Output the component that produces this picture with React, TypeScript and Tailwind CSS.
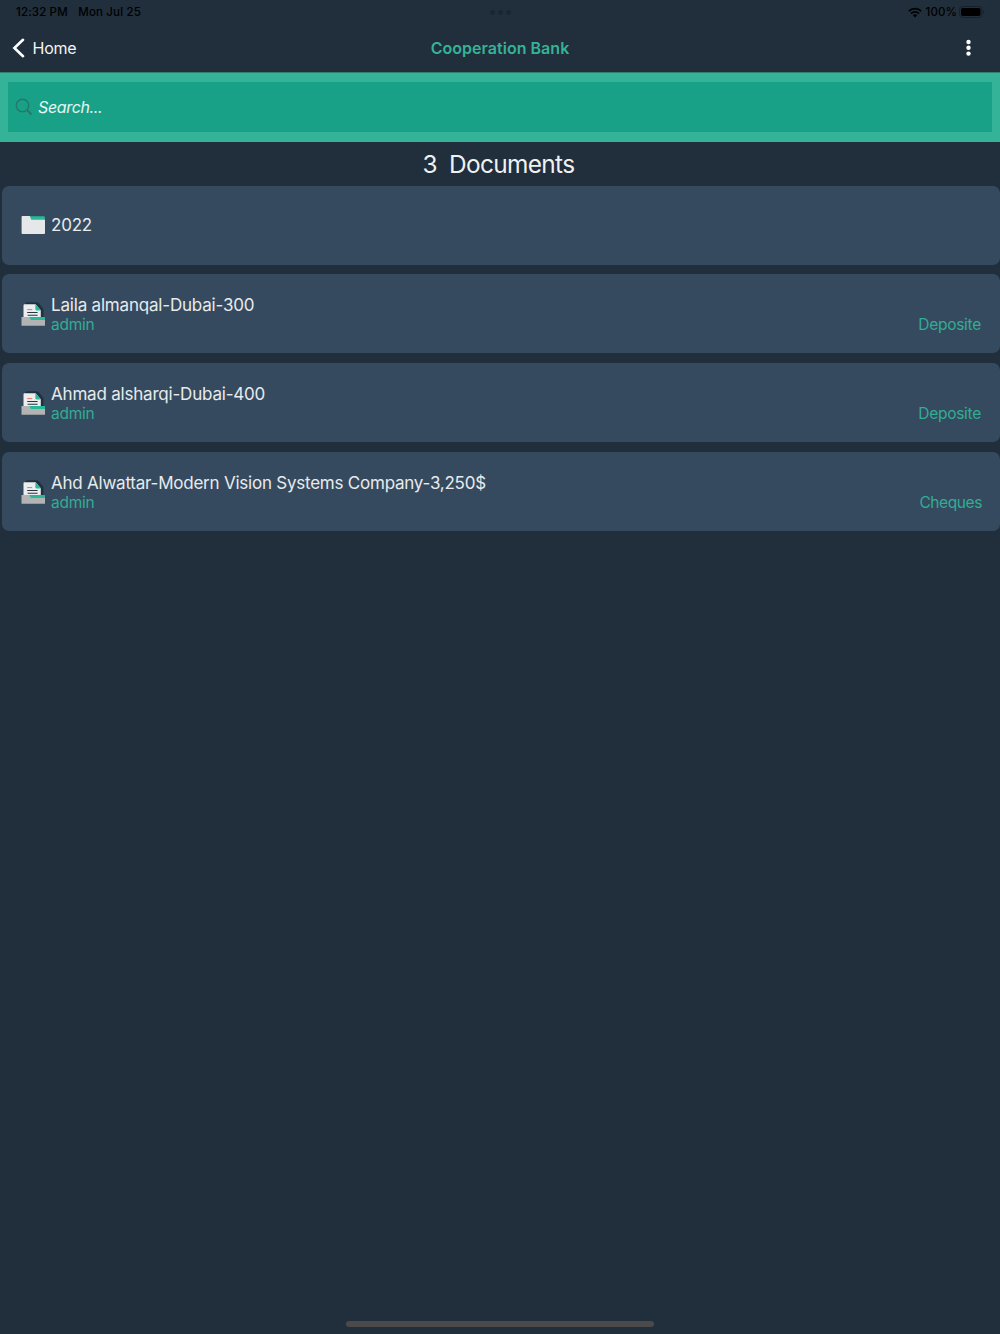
type Doc = {
  name: string;
  owner?: string;
  type?: string;
  nameTracking: string;
  typeTracking?: string;
};

const DOCS: Doc[] = [
  { name: "2022", nameTracking: "tracking-[-0.2px]" },
  {
    name: "Laila almanqal-Dubai-300",
    owner: "admin",
    type: "Deposite",
    nameTracking: "tracking-[-0.19px]",
    typeTracking: "tracking-[-0.27px]",
  },
  {
    name: "Ahmad alsharqi-Dubai-400",
    owner: "admin",
    type: "Deposite",
    nameTracking: "tracking-[-0.2px]",
    typeTracking: "tracking-[-0.27px]",
  },
  {
    name: "Ahd Alwattar-Modern Vision Systems Company-3,250$",
    owner: "admin",
    type: "Cheques",
    nameTracking: "tracking-[-0.23px]",
    typeTracking: "-mr-px tracking-[-0.4px]",
  },
];

function WifiIcon() {
  return (
    <svg width="14" height="11" viewBox="0 0 14 11" fill="none" stroke="#000" strokeWidth="1.8">
      <path d="M0.8 4.2a8.8 8.8 0 0 1 12.4 0" />
      <path d="M3 6.6a5.7 5.7 0 0 1 8 0" />
      <path d="M7 10.4 4.9 8.3a3 3 0 0 1 4.2 0z" fill="#000" stroke="none" />
    </svg>
  );
}

function BatteryIcon() {
  return (
    <svg width="26" height="12" viewBox="0 0 26 12">
      <rect x="0.5" y="0.5" width="22.5" height="11" rx="3.2" fill="none" stroke="#17212b" />
      <rect x="2" y="2" width="19.5" height="8" rx="1.8" fill="#000" />
      <path d="M24.2 4.2c1.2.5 1.2 3.1 0 3.6z" fill="#17212b" />
    </svg>
  );
}

function FolderIcon() {
  return (
    <svg width="24" height="24" viewBox="0 0 24 24">
      <path d="M8 3.2h14.8a1 1 0 0 1 1 1V9H8z" fill="#27b999" />
      <path d="M1.6 3.1h6.7c.6 0 .9.3 1 .8l.4 1.9c.2.7.6 1 1.2 1h13.1v13.1c0 .7-.5 1.2-1.2 1.2H1.8c-.7 0-1.2-.5-1.2-1.2V4.1c0-.6.4-1 1-1z" fill="#e6e7e8" />
    </svg>
  );
}

function DocumentIcon() {
  return (
    <svg width="24" height="24" viewBox="0 0 24 24">
      <path d="M5.6.3H16c.8 0 1.2.2 1.7.8l4.1 5.1c.4.5.6.9.6 1.6v8H4.2V2z" fill="#20303f" />
      <path d="M3.9 2.2h10.7l5.2 6.1V17H2.5V3.6c0-.9.5-1.4 1.4-1.4z" fill="#ecedef" />
      <path d="M14.4 2.2l5.4 6.3h-4.2c-.8 0-1.2-.5-1.2-1.2z" fill="#27b999" />
      <path d="M6.2 7.6h5" stroke="#ee705f" strokeWidth="1" />
      <path d="M6.2 10.5h10.4M6.6 13.3h10" stroke="#263645" strokeWidth="1.1" />
      <path d="M8 15h16v4H8z" fill="#27b999" />
      <path d="M.5 15h7.4c.5 0 .7.2.9.7l.5 1.4c.3.7.6 1 1.3 1H24v5.7H.5z" fill="#b3b3b3" />
    </svg>
  );
}

function StatusBar() {
  return (
    <div className="grid h-6 grid-cols-3 items-center pr-[15px] pl-4 text-[11.5px] font-medium text-black">
      <div className="flex gap-[10.5px] pt-px whitespace-pre">
        <span className="tracking-[0.15px]">12:32 PM</span>
        <span className="tracking-[0.15px]">Mon Jul 25</span>
      </div>
      <svg className="-ml-px justify-self-center" width="21" height="5" viewBox="0 0 21 5" fill="#1a2733">
        <circle cx="2.5" cy="2.5" r="2.5" />
        <circle cx="10.5" cy="2.5" r="2.5" />
        <circle cx="18.5" cy="2.5" r="2.5" />
      </svg>
      <div className="flex items-center justify-end">
        <WifiIcon />
        <span className="mr-[2px] ml-1 pt-px tracking-[0.1px]">100%</span>
        <BatteryIcon />
      </div>
    </div>
  );
}

function NavBar() {
  return (
    <header className="grid h-12 grid-cols-3 items-center pr-[29px] pl-3">
      <button type="button" className="flex items-center gap-[7.5px] text-base tracking-[-0.25px] text-[#f4f5f6]">
        <svg width="13" height="20" viewBox="0 0 13 20" fill="none" stroke="#fff" strokeWidth="2.6" strokeLinecap="round">
          <path d="M11 1.8 2.4 10 11 18.2" />
        </svg>
        Home
      </button>
      <h1 className="ml-[17px] text-center text-base font-semibold tracking-[0.03px] whitespace-nowrap text-[#35b398]">
        Cooperation Bank
      </h1>
      <button type="button" aria-label="More" className="justify-self-end">
        <svg width="5" height="18" viewBox="0 0 5 18" fill="#fff">
          <circle cx="2.5" cy="3" r="2.2" />
          <circle cx="2.5" cy="8.8" r="2.2" />
          <circle cx="2.5" cy="14.6" r="2.2" />
        </svg>
      </button>
    </header>
  );
}

function SearchBar() {
  return (
    <div className="h-[70px] border-t border-[#2e806f] bg-[#35b398] px-2 pt-[9px]">
      <label className="flex h-[50px] items-center gap-[5px] bg-[#18a187] pl-[7px]">
        <svg width="18" height="18" viewBox="0 0 18 18" fill="none" stroke="#237967" strokeWidth="1.4">
          <circle cx="7.5" cy="7.5" r="6.2" />
          <path d="m12 12 4.5 4.5" strokeWidth="1.8" />
        </svg>
        <span className="text-base tracking-[-0.35px] text-[#e8f5f2] italic">Search...</span>
      </label>
    </div>
  );
}

function DocumentRow({ doc }: { doc: Doc }) {
  return (
    <li className="flex h-[79px] items-center rounded-[7px] bg-[#354a5f] px-[19px]">
      {doc.owner ? <DocumentIcon /> : <FolderIcon />}
      <div className={doc.owner ? "ml-[6px] flex-1 pt-[2px]" : "ml-[6px] flex-1"}>
        <p className={`text-[17px] leading-[20px] text-[#e8eaec] ${doc.nameTracking}`}>{doc.name}</p>
        {doc.owner && (
          <div className="flex justify-between text-[15.5px] leading-[20px] text-[#32ad94]">
            <span className="tracking-[-0.25px]">{doc.owner}</span>
            <span className={doc.typeTracking}>{doc.type}</span>
          </div>
        )}
      </div>
    </li>
  );
}

export default function App() {
  return (
    <div className="flex h-[1334px] w-[1000px] flex-col overflow-hidden bg-[#212e3b] font-['Inter','Liberation_Sans',sans-serif]">
      <StatusBar />
      <NavBar />
      <SearchBar />
      <h2 className="flex h-[43.7px] items-center justify-center gap-[12px] pr-[3px] text-[24.4px] tracking-[-0.65px] text-[#f0f1f2]">
        <span>3</span>
        <span>Documents</span>
      </h2>
      <ul className="flex flex-col gap-[9.8px] pl-[2px]">
        {DOCS.map((doc) => (
          <DocumentRow key={doc.name} doc={doc} />
        ))}
      </ul>
      <div className="mx-auto mt-auto mb-[7px] h-[6px] w-[308px] rounded-full bg-[#4a4a4a]" />
    </div>
  );
}
